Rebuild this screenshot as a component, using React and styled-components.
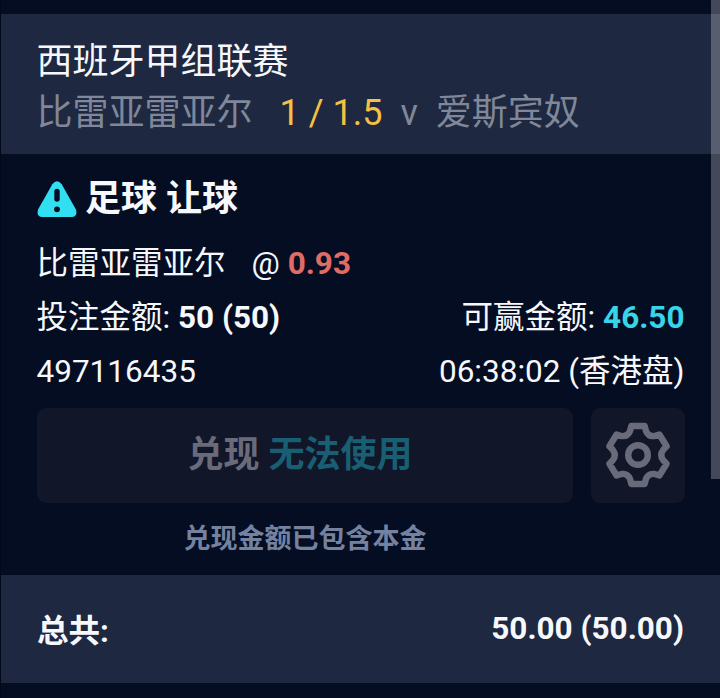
import React from "react";
import styled, { createGlobalStyle } from "styled-components";

const GlobalStyle = createGlobalStyle`
  * {
    box-sizing: border-box;
  }

  body {
    margin: 0;
    overflow: hidden;
    background: #050d22;
    color: #f6f8fc;
    font-family: Roboto, "Noto Sans CJK SC", sans-serif;
  }
`;

const Page = styled.div`
  position: relative;
  display: flex;
  flex-direction: column;
  height: 698px;
  padding: 14px 0 15px;
  border-left: 1px solid #020819;
  background: #050d22;
`;

const Scrollbar = styled.div`
  position: absolute;
  top: 0;
  right: 0;
  width: 9px;
  height: 479px;
  background: rgba(255, 255, 255, 0.25);
`;

const Header = styled.header`
  height: 140px;
  padding: 23px 36px 0 35.5px;
  background: #1e2840;
`;

const League = styled.div`
  font-size: 36px;
  line-height: 51px;
  white-space: nowrap;
`;

const Teams = styled(League)`
  display: flex;
  color: #7f8799;
`;

const Handicap = styled.span`
  margin: 0 18px 0 27px;
  color: #f5c142;
`;

const Versus = styled.span`
  margin-right: 18px;
`;

const Bet = styled.main`
  flex: 1;
  padding: 17px 35px 0 36px;
`;

const Market = styled.h2`
  display: flex;
  align-items: center;
  gap: 7px;
  height: 55px;
  margin: 0 0 11px;
  font-size: 36px;
  font-weight: 700;
  line-height: 55px;

  span {
    padding: 1px 0 0 1px;
  }
`;

const Row = styled.div`
  display: flex;
  justify-content: space-between;
  height: 54px;
  margin: 0 0.5px 0 -0.5px;
  font-size: 31.5px;
  line-height: 54px;
  white-space: pre;
`;

const Price = styled.span`
  margin-left: 26px;
`;

const Odds = styled.b`
  color: #e06c66;
`;

const Win = styled.b`
  color: #36d5e9;
`;

const Actions = styled.div`
  display: flex;
  gap: 18px;
  margin-top: 9px;
`;

const Button = styled.button`
  display: flex;
  align-items: center;
  justify-content: center;
  flex: ${(props) => (props.$square ? "0 0 94px" : "1")};
  height: 95px;
  padding: ${(props) => (props.$square ? "0 0 1px" : "0 10px 9px 0")};
  border: 0;
  border-radius: 9px;
  background: #111629;
  color: #696b7a;
  font: inherit;
  font-size: 36px;
  font-weight: 700;
  white-space: pre;
`;

const Unavailable = styled.span`
  color: #195f73;
`;

const Note = styled.p`
  margin: 16px 0 0;
  padding-right: 112px;
  color: #7482a0;
  font-size: 27px;
  font-weight: 700;
  line-height: 40px;
  text-align: center;
`;

const Total = styled.footer`
  display: flex;
  align-items: center;
  justify-content: space-between;
  height: 108px;
  padding: 0 36px 2px;
  background: #1e2840;
  font-size: 31.5px;
  font-weight: 700;
`;

function WarningIcon() {
  return (
    <svg width="40" height="38" viewBox="0 0 40 38">
      <path
        d="M15.3 4.2Q20 -1.5 24.7 4.2L38.8 29.3Q41.2 36.8 34.6 37H5.4Q-1.2 36.8 1.2 29.3Z"
        fill="#32dff2"
      />
      <path d="M20 11.5v7.5" stroke="#050d22" strokeWidth="5.4" strokeLinecap="round" />
      <circle cx="20" cy="29.3" r="2.9" fill="#050d22" />
    </svg>
  );
}

function GearIcon() {
  return (
    <svg width="66" height="66" viewBox="-33 -33 66 66" fill="none" stroke="#696b7a" strokeWidth="6.4" strokeLinejoin="round">
      <path d="M-6.7 -29H6.7L8 -23.8Q10.6 -18 16.5 -19L21.4 -20.5L28.6 -8.8L25.2 -5.2Q21.3 0 25.2 5.2L28.6 8.8L21.4 20.5L16.5 19Q10.6 18 8 23.8L6.7 29H-6.7L-8 23.8Q-10.6 18 -16.5 19L-21.4 20.5L-28.6 8.8L-25.2 5.2Q-21.3 0 -25.2 -5.2L-28.6 -8.8L-21.4 -20.5L-16.5 -19Q-10.6 -18 -8 -23.8Z" />
      <circle r="9.8" />
    </svg>
  );
}

export default function App() {
  return (
    <>
      <GlobalStyle />
      <Page>
        <Header>
          <League>西班牙甲组联赛</League>
          <Teams>
            <span>比雷亚雷亚尔</span>
            <Handicap>1 / 1.5</Handicap>
            <Versus>v</Versus>
            <span>爱斯宾奴</span>
          </Teams>
        </Header>
        <Bet>
          <Market>
            <WarningIcon />
            <span>足球 让球</span>
          </Market>
          <Row>
            <span>
              比雷亚雷亚尔
              <Price>@ <Odds>0.93</Odds></Price>
            </span>
          </Row>
          <Row>
            <span>投注金额: <b>50 (50)</b></span>
            <span>可赢金额: <Win>46.50</Win></span>
          </Row>
          <Row>
            <span>497116435</span>
            <span>06:38:02 (香港盘)</span>
          </Row>
          <Actions>
            <Button>兑现 <Unavailable>无法使用</Unavailable></Button>
            <Button $square aria-label="设置"><GearIcon /></Button>
          </Actions>
          <Note>兑现金额已包含本金</Note>
        </Bet>
        <Total>
          <span>总共:</span>
          <span>50.00 (50.00)</span>
        </Total>
        <Scrollbar />
      </Page>
    </>
  );
}
